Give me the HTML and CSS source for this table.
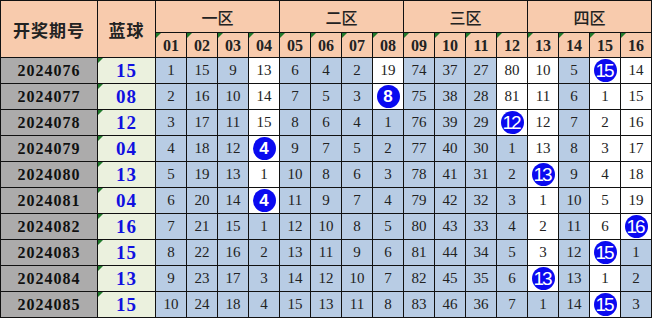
FILE: index.html
```html
<!DOCTYPE html>
<html lang="zh">
<head>
<meta charset="utf-8">
<link rel="stylesheet" href="styles.css">
</head>
<body>
<div class="chart">
  <div class="h hk r2">开奖期号</div>
  <div class="h hk r2">蓝球</div>
  <div class="h hz s4">一区</div>
  <div class="h hz s4">二区</div>
  <div class="h hz s4">三区</div>
  <div class="h hz s4">四区</div>
  <div class="h hn t">01</div><div class="h hn t">02</div><div class="h hn t">03</div><div class="h hn t">04</div>
  <div class="h hn t">05</div><div class="h hn t">06</div><div class="h hn t">07</div><div class="h hn t">08</div>
  <div class="h hn t">09</div><div class="h hn t">10</div><div class="h hn t">11</div><div class="h hn t">12</div>
  <div class="h hn t">13</div><div class="h hn t">14</div><div class="h hn t">15</div><div class="h hn t">16</div>

  <div class="d">2024076</div><div class="k t">15</div>
  <div class="b">1</div><div class="b">15</div><div class="b">9</div><div class="w">13</div>
  <div class="b">6</div><div class="b">4</div><div class="b">2</div><div class="w">19</div>
  <div class="b">74</div><div class="b">37</div><div class="b">27</div><div class="w">80</div>
  <div class="w">10</div><div class="b">5</div><div class="w"><span class="ball two">15</span></div><div class="w">14</div>

  <div class="d">2024077</div><div class="k t">08</div>
  <div class="b">2</div><div class="b">16</div><div class="b">10</div><div class="w">14</div>
  <div class="b">7</div><div class="b">5</div><div class="b">3</div><div class="w"><span class="ball">8</span></div>
  <div class="b">75</div><div class="b">38</div><div class="b">28</div><div class="w">81</div>
  <div class="w">11</div><div class="b">6</div><div class="w">1</div><div class="w">15</div>

  <div class="d">2024078</div><div class="k t">12</div>
  <div class="b">3</div><div class="b">17</div><div class="b">11</div><div class="w">15</div>
  <div class="b">8</div><div class="b">6</div><div class="b">4</div><div class="b">1</div>
  <div class="b">76</div><div class="b">39</div><div class="b">29</div><div class="w"><span class="ball two">12</span></div>
  <div class="w">12</div><div class="b">7</div><div class="w">2</div><div class="w">16</div>

  <div class="d">2024079</div><div class="k t">04</div>
  <div class="b">4</div><div class="b">18</div><div class="b">12</div><div class="w"><span class="ball">4</span></div>
  <div class="b">9</div><div class="b">7</div><div class="b">5</div><div class="b">2</div>
  <div class="b">77</div><div class="b">40</div><div class="b">30</div><div class="b">1</div>
  <div class="w">13</div><div class="b">8</div><div class="w">3</div><div class="w">17</div>

  <div class="d">2024080</div><div class="k t">13</div>
  <div class="b">5</div><div class="b">19</div><div class="b">13</div><div class="w">1</div>
  <div class="b">10</div><div class="b">8</div><div class="b">6</div><div class="b">3</div>
  <div class="b">78</div><div class="b">41</div><div class="b">31</div><div class="b">2</div>
  <div class="w"><span class="ball two">13</span></div><div class="b">9</div><div class="w">4</div><div class="w">18</div>

  <div class="d">2024081</div><div class="k t">04</div>
  <div class="b">6</div><div class="b">20</div><div class="b">14</div><div class="w"><span class="ball">4</span></div>
  <div class="b">11</div><div class="b">9</div><div class="b">7</div><div class="b">4</div>
  <div class="b">79</div><div class="b">42</div><div class="b">32</div><div class="b">3</div>
  <div class="w">1</div><div class="b">10</div><div class="w">5</div><div class="w">19</div>

  <div class="d">2024082</div><div class="k t">16</div>
  <div class="b">7</div><div class="b">21</div><div class="b">15</div><div class="b">1</div>
  <div class="b">12</div><div class="b">10</div><div class="b">8</div><div class="b">5</div>
  <div class="b">80</div><div class="b">43</div><div class="b">33</div><div class="b">4</div>
  <div class="w">2</div><div class="b">11</div><div class="w">6</div><div class="w"><span class="ball two">16</span></div>

  <div class="d">2024083</div><div class="k t">15</div>
  <div class="b">8</div><div class="b">22</div><div class="b">16</div><div class="b">2</div>
  <div class="b">13</div><div class="b">11</div><div class="b">9</div><div class="b">6</div>
  <div class="b">81</div><div class="b">44</div><div class="b">34</div><div class="b">5</div>
  <div class="w">3</div><div class="b">12</div><div class="w"><span class="ball two">15</span></div><div class="b">1</div>

  <div class="d">2024084</div><div class="k t">13</div>
  <div class="b">9</div><div class="b">23</div><div class="b">17</div><div class="b">3</div>
  <div class="b">14</div><div class="b">12</div><div class="b">10</div><div class="b">7</div>
  <div class="b">82</div><div class="b">45</div><div class="b">35</div><div class="b">6</div>
  <div class="w"><span class="ball two">13</span></div><div class="b">13</div><div class="w">1</div><div class="b">2</div>

  <div class="d">2024085</div><div class="k t">15</div>
  <div class="b">10</div><div class="b">24</div><div class="b">18</div><div class="b">4</div>
  <div class="b">15</div><div class="b">13</div><div class="b">11</div><div class="b">8</div>
  <div class="b">83</div><div class="b">46</div><div class="b">36</div><div class="b">7</div>
  <div class="b">1</div><div class="b">14</div><div class="w"><span class="ball two">15</span></div><div class="b">3</div>
</div>
</body>
</html>
```

FILE: styles.css
```css
html, body {
  margin: 0;
  padding: 0;
  background: #ffffff;
}

.chart {
  display: grid;
  grid-template-columns: 96px 57px repeat(16, 30px);
  grid-template-rows: 31px 24px repeat(10, 25px);
  gap: 1px;
  padding: 1px;
  background: #111;
  width: 650px;
  font-family: "Liberation Serif", "DejaVu Serif", serif;
  color: #222;
}

.chart > div {
  display: flex;
  align-items: center;
  justify-content: center;
  position: relative;
  font-size: 15px;
}

.h {
  background: #f8cbad;
  color: #222;
}

.hk {
  font-family: "Noto Sans CJK SC", sans-serif;
  font-size: 17px !important;
  font-weight: 700;
  letter-spacing: 1px;
}

.hz {
  font-family: "Noto Sans CJK SC", sans-serif;
  font-size: 16px !important;
  font-weight: 500;
}

.hn {
  font-weight: 700;
  font-size: 16px !important;
  padding-top: 2px;
}

.r2 { grid-row: span 2; }
.s4 { grid-column: span 4; }

.d {
  background: #acabab;
  font-weight: 700;
  font-size: 16px !important;
  letter-spacing: 1px;
  color: #111;
}

.k {
  background: #ebf1de;
  color: #1010e0;
  font-weight: 700;
  font-size: 19px !important;
  letter-spacing: 1px;
}

.b { background: #b8cce4; }
.w { background: #ffffff; }

.t::before {
  content: "";
  position: absolute;
  left: 0;
  top: 0;
  border-top: 5px solid #217a2c;
  border-right: 5px solid transparent;
}

.ball {
  display: flex;
  align-items: center;
  justify-content: center;
  width: 23px;
  height: 23px;
  border-radius: 50%;
  background: #0a0af0;
  color: #fff;
  font-family: "Liberation Sans", Arial, sans-serif;
  font-weight: 700;
  font-size: 17px;
}

.ball.two {
  font-weight: 400;
  font-size: 19px;
  letter-spacing: -2px;
  padding-right: 2px;
  box-sizing: border-box;
}
```
